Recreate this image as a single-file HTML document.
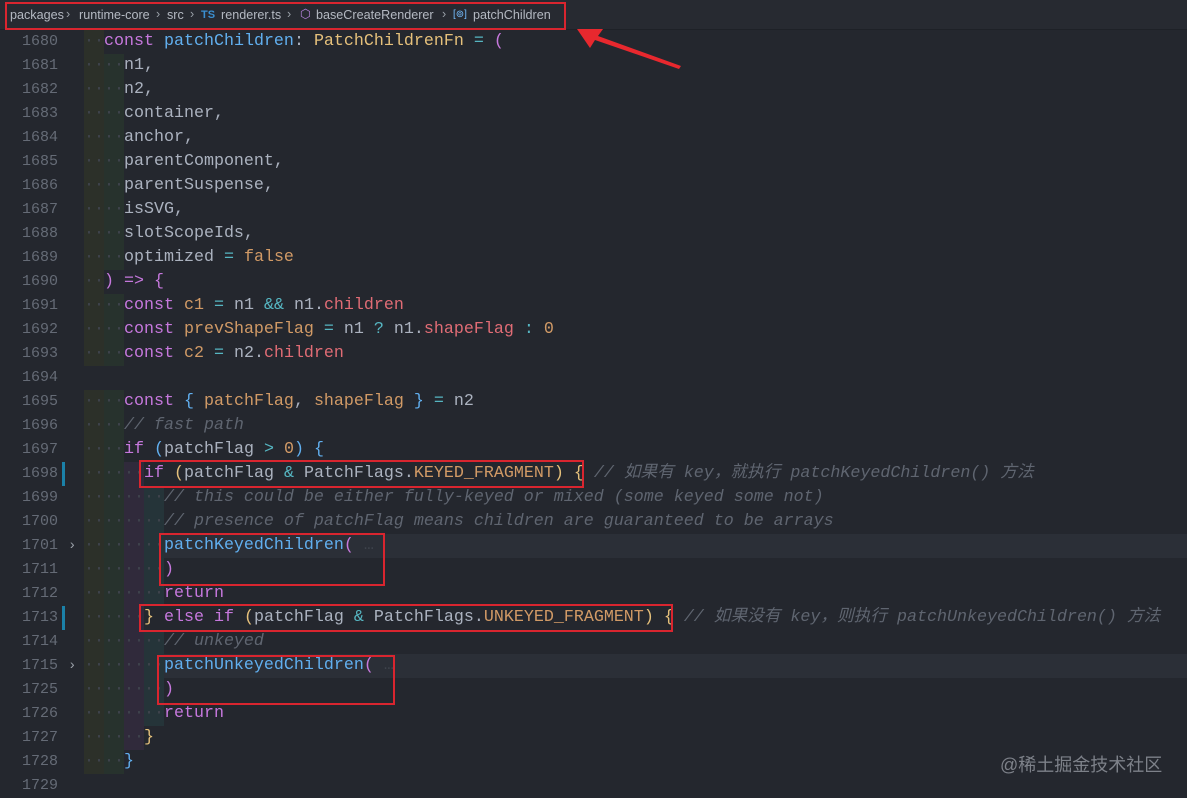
<!DOCTYPE html>
<html><head><meta charset="utf-8"><style>
*{margin:0;padding:0;box-sizing:border-box}
body{width:1187px;height:797px;overflow:hidden;background:#24272e;position:relative;font-family:"Liberation Mono",monospace}
.bc{position:absolute;left:0;top:0;width:1187px;height:30px;background:#272a31;border-bottom:1px solid #1e2127;font:12.6px "Liberation Sans",sans-serif;color:#b4b9c2;white-space:nowrap}
.bc span{position:absolute;top:8px}
.bc .s{color:#9aa0a8;top:7px}
.ln{position:absolute;left:0;width:58px;text-align:right;font-size:15px;color:#656b76;height:24px;line-height:24px}
.row{position:absolute;left:84px;right:0;height:24px;line-height:24px;font-size:16.67px;white-space:pre;color:#abb2bf}
.band{position:absolute;top:0;height:24px;width:20px}
.code{position:absolute;top:0;left:0}
.k{color:#c678dd}.f{color:#61afef}.t{color:#e5c07b}.o{color:#56b6c2}.v{color:#d19a66}.p{color:#e06c75}.c{color:#5f6570;font-style:italic}.y{color:#e5c07b}.pk{color:#c678dd}.b{color:#61afef}.d{color:#3f444d}
.box{position:absolute;border:2px solid #d9252f}
</style></head><body>
<div class="bc">
<span style="left:10px">packages</span><span class="s" style="left:66px">›</span>
<span style="left:79px">runtime-core</span><span class="s" style="left:156px">›</span>
<span style="left:167px">src</span><span class="s" style="left:190px">›</span>
<span style="left:201px;color:#3b8fd0;font-weight:bold;font-size:11px;top:9px">TS</span>
<span style="left:221px">renderer.ts</span><span class="s" style="left:287px">›</span>
<span style="left:300px;color:#b180d7;top:6px">⬡</span>
<span style="left:316px">baseCreateRenderer</span><span class="s" style="left:442px">›</span>
<span style="left:453px;color:#75beff;font-size:10px;top:9px">[⊚]</span>
<span style="left:473px">patchChildren</span>
</div>
<div id="g"></div>
<div class="box" style="left:5px;top:2px;width:561px;height:28px"></div>
<div class="box" style="left:139px;top:460px;width:445px;height:28px"></div>
<div class="box" style="left:159px;top:533px;width:226px;height:53px"></div>
<div class="box" style="left:139px;top:604px;width:534px;height:28px"></div>
<div class="box" style="left:157px;top:655px;width:238px;height:50px"></div>
<svg style="position:absolute;left:0;top:0" width="1187" height="797"><polygon points="577,29 603,29 598,36 681,66 679,69 595,40 590,48" fill="#e8282e"/></svg>
<div style="position:absolute;left:1000px;top:751px;font:18px 'Liberation Sans','Noto Sans CJK SC',sans-serif;color:#7d8189">@稀土掘金技术社区</div>
<script>
const L=[
[1680,2,'<span class="k">const</span> <span class="f">patchChildren</span>: <span class="t">PatchChildrenFn</span> <span class="o">=</span> <span class="pk">(</span>'],
[1681,4,'n1,'],[1682,4,'n2,'],[1683,4,'container,'],[1684,4,'anchor,'],[1685,4,'parentComponent,'],[1686,4,'parentSuspense,'],[1687,4,'isSVG,'],[1688,4,'slotScopeIds,'],
[1689,4,'optimized <span class="o">=</span> <span class="v">false</span>'],
[1690,2,'<span class="pk">)</span> <span class="k">=&gt;</span> <span class="pk">{</span>'],
[1691,4,'<span class="k">const</span> <span class="v">c1</span> <span class="o">=</span> n1 <span class="o">&amp;&amp;</span> n1.<span class="p">children</span>'],
[1692,4,'<span class="k">const</span> <span class="v">prevShapeFlag</span> <span class="o">=</span> n1 <span class="o">?</span> n1.<span class="p">shapeFlag</span> <span class="o">:</span> <span class="v">0</span>'],
[1693,4,'<span class="k">const</span> <span class="v">c2</span> <span class="o">=</span> n2.<span class="p">children</span>'],
[1694,0,''],
[1695,4,'<span class="k">const</span> <span class="b">{</span> <span class="v">patchFlag</span>, <span class="v">shapeFlag</span> <span class="b">}</span> <span class="o">=</span> n2'],
[1696,4,'<span class="c">// fast path</span>'],
[1697,4,'<span class="k">if</span> <span class="b">(</span>patchFlag <span class="o">&gt;</span> <span class="v">0</span><span class="b">)</span> <span class="b">{</span>'],
[1698,6,'<span class="k">if</span> <span class="y">(</span>patchFlag <span class="o">&amp;</span> PatchFlags.<span class="v">KEYED_FRAGMENT</span><span class="y">)</span> <span class="y">{</span> <span class="c">// 如果有 key，就执行 patchKeyedChildren() 方法</span>'],
[1699,8,'<span class="c">// this could be either fully-keyed or mixed (some keyed some not)</span>'],
[1700,8,'<span class="c">// presence of patchFlag means children are guaranteed to be arrays</span>'],
[1701,8,'<span class="f">patchKeyedChildren</span><span class="pk">(</span><span class="d"> …</span>'],
[1711,8,'<span class="pk">)</span>'],
[1712,8,'<span class="k">return</span>'],
[1713,6,'<span class="y">}</span> <span class="k">else if</span> <span class="y">(</span>patchFlag <span class="o">&amp;</span> PatchFlags.<span class="v">UNKEYED_FRAGMENT</span><span class="y">)</span> <span class="y">{</span> <span class="c">// 如果没有 key，则执行 patchUnkeyedChildren() 方法</span>'],
[1714,8,'<span class="c">// unkeyed</span>'],
[1715,8,'<span class="f">patchUnkeyedChildren</span><span class="pk">(</span><span class="d"> …</span>'],
[1725,8,'<span class="pk">)</span>'],
[1726,8,'<span class="k">return</span>'],
[1727,6,'<span class="y">}</span>'],
[1728,4,'<span class="b">}</span>'],
[1729,0,'']];
const bands=['#2c3029','#27322d','#302a3b','#253439'];
let h='';
L.forEach((l,i)=>{const top=30+24*i;
h+=`<div class="ln" style="top:${top}px">${l[0]}</div>`;
if(l[0]==1698||l[0]==1713)h+=`<div style="position:absolute;left:62px;top:${top}px;width:3px;height:24px;background:#1b81a8"></div>`;
if(l[0]==1701||l[0]==1715)h+=`<div style="position:absolute;left:68px;top:${top}px;line-height:24px;color:#9aa0a8;font-size:14px">›</div>`;
let bg=(l[0]==1701||l[0]==1715)?'background:#2b2f37;':'';
let inner='';
let lv=l[1]/2;
for(let k=0;k<lv;k++)inner+=`<div class="band" style="left:${k*20}px;background:${bands[k]}"></div>`;
let dots='<span class="d">'+'·'.repeat(l[1])+'</span>';
inner+=`<div class="code">${l[1]?dots:''}${l[2]}</div>`;
h+=`<div class="row" style="top:${top}px;${bg}">${inner}</div>`;});
document.getElementById('g').innerHTML=h;
</script>
</body></html>
